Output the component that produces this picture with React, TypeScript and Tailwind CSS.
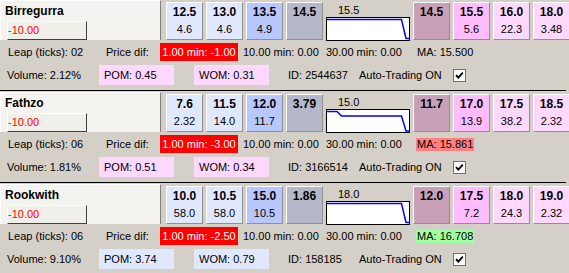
import React from "react";

type Cell = { top: string; bottom?: string; bg: string };
type Row = {
  name: string;
  left: Cell[];
  chartLabel: string;
  chartPath: string;
  right: Cell[];
  leap: string;
  dif: string;
  ma: string;
  maBg: string;
  volume: string;
  pom: string;
  wom: string;
  boxBg: string;
  id: string;
};

const LIGHT = "bg-[#e0e8ff]";
const BLUE = "bg-[#b8c8ff]";
const GRAY = "bg-[#b4b8c8]";
const MAUVE = "bg-[#c8a0b8]";
const PINK = "bg-[#ffbcff]";
const LPINK = "bg-[#ffd8ff]";

const rows: Row[] = [
  {
    name: "Birregurra",
    left: [
      { top: "12.5", bottom: "4.6", bg: LIGHT },
      { top: "13.0", bottom: "4.6", bg: LIGHT },
      { top: "13.5", bottom: "4.9", bg: BLUE },
      { top: "14.5", bg: GRAY },
    ],
    chartLabel: "15.5",
    chartPath: "M0 1.5 H74.5 L79 20.5 H82",
    right: [
      { top: "14.5", bg: MAUVE },
      { top: "15.5", bottom: "5.6", bg: PINK },
      { top: "16.0", bottom: "22.3", bg: LPINK },
      { top: "18.0", bottom: "3.48", bg: LPINK },
    ],
    leap: "02",
    dif: "-1.00",
    ma: "15.500",
    maBg: "",
    volume: "2.12%",
    pom: "0.45",
    wom: "0.31",
    boxBg: "bg-[#ffd8ff]",
    id: "2544637",
  },
  {
    name: "Fathzo",
    left: [
      { top: "7.6", bottom: "2.32", bg: LIGHT },
      { top: "11.5", bottom: "14.0", bg: LIGHT },
      { top: "12.0", bottom: "11.7", bg: BLUE },
      { top: "3.79", bg: GRAY },
    ],
    chartLabel: "15.0",
    chartPath: "M0 1.5 H10 L14.5 6 H74.5 L79 21 H82",
    right: [
      { top: "11.7", bg: MAUVE },
      { top: "17.0", bottom: "13.9", bg: PINK },
      { top: "17.5", bottom: "38.2", bg: LPINK },
      { top: "18.5", bottom: "2.32", bg: LPINK },
    ],
    leap: "06",
    dif: "-3.00",
    ma: "15.861",
    maBg: "bg-[#ff8080]",
    volume: "1.81%",
    pom: "0.51",
    wom: "0.34",
    boxBg: "bg-[#ffd8ff]",
    id: "3166514",
  },
  {
    name: "Rookwith",
    left: [
      { top: "10.0", bottom: "58.0", bg: LIGHT },
      { top: "10.5", bottom: "58.0", bg: LIGHT },
      { top: "15.0", bottom: "10.5", bg: BLUE },
      { top: "1.86", bg: GRAY },
    ],
    chartLabel: "18.0",
    chartPath: "M0 1.5 H74.5 L79 20.5 H82",
    right: [
      { top: "12.0", bg: MAUVE },
      { top: "17.5", bottom: "7.2", bg: PINK },
      { top: "18.0", bottom: "24.3", bg: LPINK },
      { top: "19.0", bottom: "2.32", bg: LPINK },
    ],
    leap: "06",
    dif: "-2.50",
    ma: "16.708",
    maBg: "bg-[#a0ffa0]",
    volume: "9.10%",
    pom: "3.74",
    wom: "0.79",
    boxBg: "bg-[#e0e8ff]",
    id: "158185",
  },
];

function PriceCell({ c }: { c: Cell }) {
  return (
    <div
      className={`w-[37px] h-[38px] mt-[2px] shrink-0 flex flex-col items-center pt-[2px] border-t border-l border-t-white border-l-white border-r border-b border-r-[#909090] border-b-[#909090] ${c.bg}`}
    >
      <div className="text-[12px] font-bold leading-[14px]">{c.top}</div>
      {c.bottom && <div className="text-[11px] leading-[13px] mt-[4px]">{c.bottom}</div>}
    </div>
  );
}

function Block({ r, first }: { r: Row; first: boolean }) {
  return (
    <div className={`flex flex-col ${first ? "h-[90px]" : "h-[92px]"}`}>
      {!first && <div className="h-[2px] w-[566px] border-t border-black shrink-0" />}
      <div className="flex h-[40px] shrink-0">
        <div className="w-[161px] h-[40px] shrink-0 bg-[#f4f3ef] border-t border-l border-white border-r border-r-[#808080] flex flex-col">
          <div className="pl-[4px] pt-[3px] text-[12px] font-bold leading-[14px]">{r.name}</div>
          <div className="ml-[6px] mt-[3px] w-[80px] h-[19px] bg-[#f0efea] border-t border-l border-white border-r border-b border-r-[#404040] border-b-[#404040] text-[11px] leading-[13px] text-[#ff0000] flex items-center">
            -10.00
          </div>
        </div>
        <div className="flex gap-[3px] ml-[5px]">
          {r.left.map((c, i) => (
            <PriceCell key={i} c={c} />
          ))}
          <div className="w-[84px] h-[40px] shrink-0 flex flex-col">
            <div className="pl-[12px] pt-[4px] text-[11px] leading-[13px]">{r.chartLabel}</div>
            <div className="mt-auto h-[24px] border border-black bg-white">
              <svg width="82" height="22" viewBox="0 0 82 22" className="block">
                <path d={r.chartPath} fill="none" stroke="#0000ff" strokeWidth="1.5" />
              </svg>
            </div>
          </div>
          {r.right.map((c, i) => (
            <PriceCell key={i} c={c} />
          ))}
        </div>
      </div>
      <div className="flex items-center h-[18px] mt-[3px] text-[11px] leading-[13px] shrink-0">
        <div className="ml-[8px] w-[98px] whitespace-nowrap">Leap (ticks): {r.leap}</div>
        <div className="w-[54px] whitespace-nowrap">Price dif:</div>
        <div className="w-[78px] h-[18px] bg-[#ff0000] text-white flex items-center justify-center whitespace-nowrap">
          1.00 min: {r.dif}
        </div>
        <div className="ml-[5px] w-[83px] whitespace-nowrap">10.00 min: 0.00</div>
        <div className="w-[90px] whitespace-nowrap">30.00 min: 0.00</div>
        <div className={`px-[1px] h-[13px] whitespace-nowrap ${r.maBg}`}>MA: {r.ma}</div>
      </div>
      <div className="flex items-center h-[20px] mt-[4px] text-[11px] leading-[13px] shrink-0">
        <div className="ml-[7px] w-[92px] whitespace-nowrap">Volume: {r.volume}</div>
        <div className={`w-[75px] h-[20px] pl-[5px] flex items-center whitespace-nowrap ${r.boxBg}`}>POM: {r.pom}</div>
        <div className={`ml-[20px] w-[75px] h-[20px] pl-[5px] flex items-center whitespace-nowrap ${r.boxBg}`}>WOM: {r.wom}</div>
        <div className="ml-[19px] w-[71px] whitespace-nowrap">ID: {r.id}</div>
        <div className="w-[94px] whitespace-nowrap">Auto-Trading ON</div>
        <div className="w-[13px] h-[13px] border border-[#707070] bg-[#f8f8f8] flex items-center justify-center">
          <svg width="11" height="11" viewBox="0 0 11 11" className="block">
            <path d="M2 5.2 L4.3 7.6 L8.8 2.6" fill="none" stroke="#000" strokeWidth="1.8" />
          </svg>
        </div>
      </div>
    </div>
  );
}

export default function App() {
  return (
    <div className="w-[569px] h-[273px] overflow-hidden bg-[#d4d0c8] text-black font-['Liberation_Sans',Arial,sans-serif]">
      {rows.map((r, i) => (
        <Block key={i} r={r} first={i === 0} />
      ))}
    </div>
  );
}
